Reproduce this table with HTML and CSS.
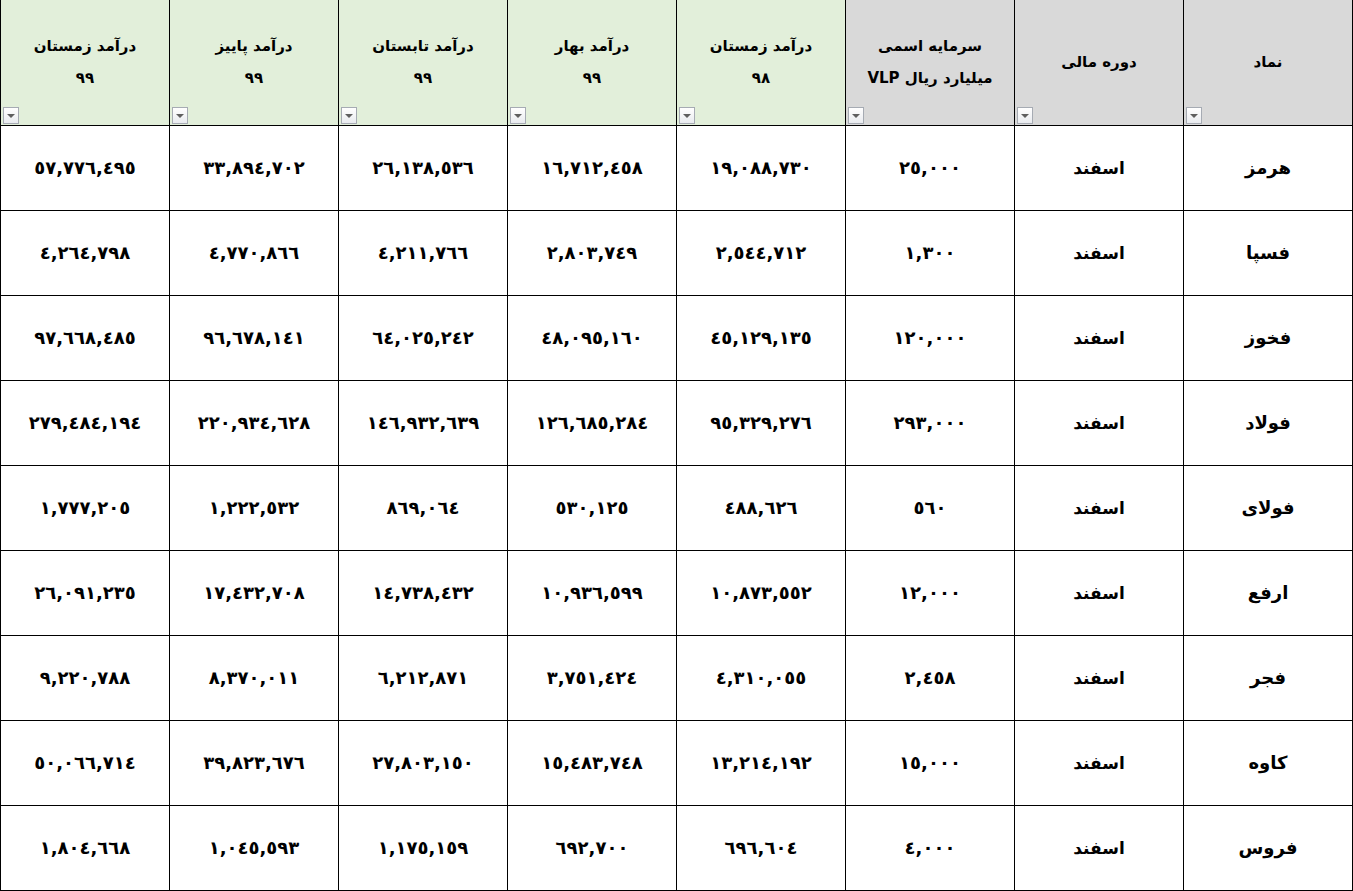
FILE: index.html
```html
<!DOCTYPE html>
<html lang="fa" dir="rtl">
<head>
<meta charset="utf-8">
<title>درآمد شرکت‌ها</title>
<link rel="stylesheet" href="styles.css">
</head>
<body>
<div class="sheet">
  <div class="hd gray"><span class="t">نماد</span><span class="dd"></span></div>
  <div class="hd gray"><span class="t">دوره مالی</span><span class="dd"></span></div>
  <div class="hd gray"><span class="t">سرمایه اسمی<br>میلیارد ریال VLP</span><span class="dd"></span></div>
  <div class="hd green"><span class="t">درآمد زمستان<br>٩٨</span><span class="dd"></span></div>
  <div class="hd green"><span class="t">درآمد بهار<br>٩٩</span><span class="dd"></span></div>
  <div class="hd green"><span class="t">درآمد تابستان<br>٩٩</span><span class="dd"></span></div>
  <div class="hd green"><span class="t">درآمد پاییز<br>٩٩</span><span class="dd"></span></div>
  <div class="hd green"><span class="t">درآمد زمستان<br>٩٩</span><span class="dd"></span></div>

  <div class="c name">هرمز</div><div class="c">اسفند</div><div class="c num">٢٥,٠٠٠</div><div class="c num">١٩,٠٨٨,٧٣٠</div><div class="c num">١٦,٧١٢,٤٥٨</div><div class="c num">٢٦,١٣٨,٥٣٦</div><div class="c num">٣٣,٨٩٤,٧٠٢</div><div class="c num">٥٧,٧٧٦,٤٩٥</div>

  <div class="c name">فسپا</div><div class="c">اسفند</div><div class="c num">١,٣٠٠</div><div class="c num">٢,٥٤٤,٧١٢</div><div class="c num">٢,٨٠٣,٧٤٩</div><div class="c num">٤,٢١١,٧٦٦</div><div class="c num">٤,٧٧٠,٨٦٦</div><div class="c num">٤,٢٦٤,٧٩٨</div>

  <div class="c name">فخوز</div><div class="c">اسفند</div><div class="c num">١٢٠,٠٠٠</div><div class="c num">٤٥,١٢٩,١٣٥</div><div class="c num">٤٨,٠٩٥,١٦٠</div><div class="c num">٦٤,٠٢٥,٢٤٢</div><div class="c num">٩٦,٦٧٨,١٤١</div><div class="c num">٩٧,٦٦٨,٤٨٥</div>

  <div class="c name">فولاد</div><div class="c">اسفند</div><div class="c num">٢٩٣,٠٠٠</div><div class="c num">٩٥,٣٢٩,٢٧٦</div><div class="c num">١٢٦,٦٨٥,٢٨٤</div><div class="c num">١٤٦,٩٣٢,٦٣٩</div><div class="c num">٢٢٠,٩٣٤,٦٢٨</div><div class="c num">٢٧٩,٤٨٤,١٩٤</div>

  <div class="c name">فولای</div><div class="c">اسفند</div><div class="c num">٥٦٠</div><div class="c num">٤٨٨,٦٢٦</div><div class="c num">٥٣٠,١٢٥</div><div class="c num">٨٦٩,٠٦٤</div><div class="c num">١,٢٢٢,٥٣٢</div><div class="c num">١,٧٧٧,٢٠٥</div>

  <div class="c name">ارفع</div><div class="c">اسفند</div><div class="c num">١٢,٠٠٠</div><div class="c num">١٠,٨٧٣,٥٥٢</div><div class="c num">١٠,٩٣٦,٥٩٩</div><div class="c num">١٤,٧٣٨,٤٣٢</div><div class="c num">١٧,٤٣٢,٧٠٨</div><div class="c num">٢٦,٠٩١,٢٣٥</div>

  <div class="c name">فجر</div><div class="c">اسفند</div><div class="c num">٢,٤٥٨</div><div class="c num">٤,٣١٠,٠٥٥</div><div class="c num">٣,٧٥١,٤٢٤</div><div class="c num">٦,٢١٢,٨٧١</div><div class="c num">٨,٣٧٠,٠١١</div><div class="c num">٩,٢٢٠,٧٨٨</div>

  <div class="c name">کاوه</div><div class="c">اسفند</div><div class="c num">١٥,٠٠٠</div><div class="c num">١٣,٢١٤,١٩٢</div><div class="c num">١٥,٤٨٣,٧٤٨</div><div class="c num">٢٧,٨٠٣,١٥٠</div><div class="c num">٣٩,٨٢٣,٦٧٦</div><div class="c num">٥٠,٠٦٦,٧١٤</div>

  <div class="c name">فروس</div><div class="c">اسفند</div><div class="c num">٤,٠٠٠</div><div class="c num">٦٩٦,٦٠٤</div><div class="c num">٦٩٢,٧٠٠</div><div class="c num">١,١٧٥,١٥٩</div><div class="c num">١,٠٤٥,٥٩٣</div><div class="c num">١,٨٠٤,٦٦٨</div>
</div>
</body>
</html>
```
FILE: styles.css
```css
html, body {
  margin: 0;
  padding: 0;
  background: #ffffff;
}

body {
  font-family: "DejaVu Sans", "Noto Sans", sans-serif;
  color: #000;
}

.sheet {
  display: grid;
  grid-template-columns: repeat(8, 168px);
  grid-template-rows: 125px repeat(9, 84px);
  gap: 1px;
  padding: 0 1px 1px 1px;
  background: #000;
  width: 1353px;
  box-sizing: border-box;
}

.hd {
  position: relative;
  display: flex;
  align-items: center;
  justify-content: center;
  text-align: center;
}

.hd.green { background: #e2efda; }
.hd.gray { background: #d9d9d9; }

.hd .t {
  font-size: 15px;
  line-height: 32px;
  font-weight: bold;
  padding-bottom: 2px;
}

.dd {
  position: absolute;
  left: 2px;
  bottom: 1px;
  width: 14px;
  height: 15px;
  border: 1px solid #a6abb3;
  background: linear-gradient(#ffffff, #e9ebef);
}

.dd::after {
  content: "";
  position: absolute;
  left: 3px;
  top: 6px;
  border-left: 4px solid transparent;
  border-right: 4px solid transparent;
  border-top: 4px solid #5f5f5f;
}

.c {
  background: #fff;
  display: flex;
  align-items: center;
  justify-content: center;
  font-size: 17px;
  font-weight: bold;
}

.c.name { font-size: 18px; padding-bottom: 2px; }

.c.num { direction: ltr; font-size: 18px; padding-bottom: 2px; }
```
